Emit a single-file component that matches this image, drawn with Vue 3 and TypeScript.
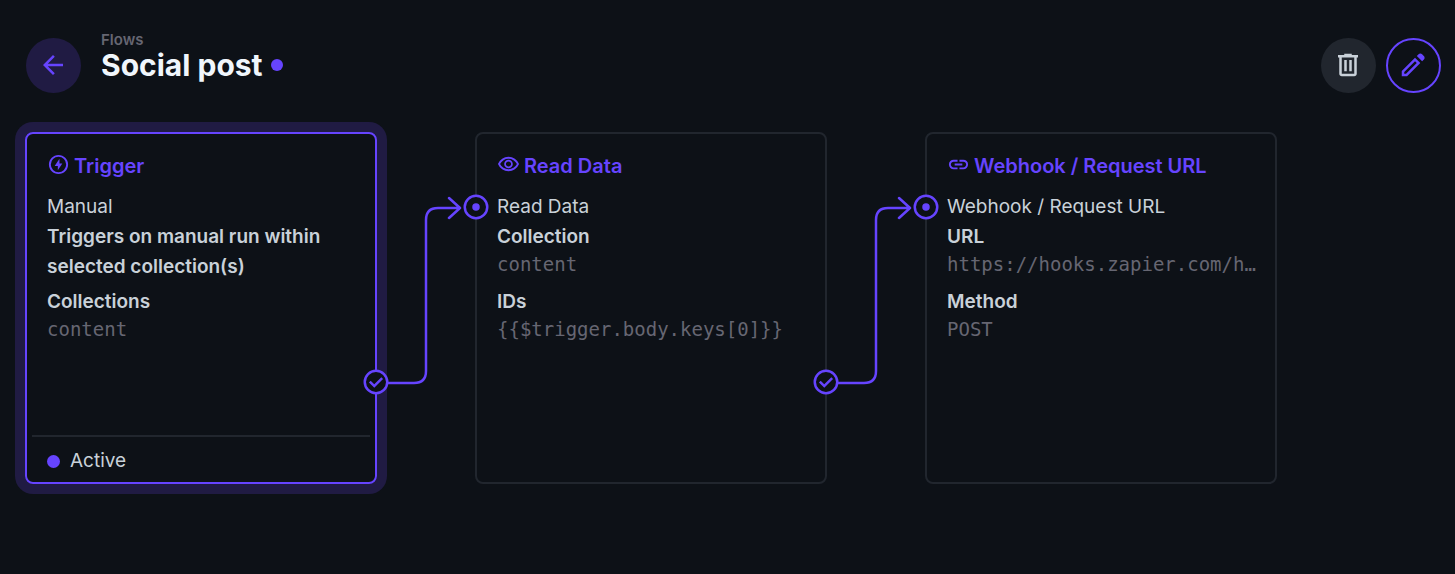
<script setup lang="ts">
interface Option {
  label: string
  value: string
}

interface FlowNode {
  id: string
  title: string
  icon: string
  name: string
  description?: string
  options: Option[]
  status?: string
  hasInput: boolean
  hasOutput: boolean
}

const nodes: FlowNode[] = [
  {
    id: 'trigger',
    title: 'Trigger',
    icon: 'M11.3 18 16 11H13V6L8 13.500h3.300zM12 22q-2.075 0-3.9-.788-1.825-.787-3.175-2.137-1.35-1.35-2.137-3.175Q2 14.075 2 12t.788-3.9q.787-1.825 2.137-3.175 1.35-1.35 3.175-2.137Q9.925 2 12 2t3.9.788q1.825.787 3.175 2.137 1.35 1.35 2.137 3.175Q22 9.925 22 12t-.788 3.9q-.787 1.825-2.137 3.175-1.35 1.35-3.175 2.137Q14.075 22 12 22Zm0-2q3.35 0 5.675-2.325Q20 15.35 20 12q0-3.35-2.325-5.675Q15.35 4 12 4 8.65 4 6.325 6.325 4 8.65 4 12q0 3.35 2.325 5.675Q8.65 20 12 20Z',
    name: 'Manual',
    description: 'Triggers on manual run within selected collection(s)',
    options: [{ label: 'Collections', value: 'content' }],
    status: 'Active',
    hasInput: false,
    hasOutput: true,
  },
  {
    id: 'read',
    title: 'Read Data',
    icon: 'M12 16q1.875 0 3.188-1.312Q16.5 13.375 16.5 11.5q0-1.875-1.312-3.188Q13.875 7 12 7q-1.875 0-3.188 1.312Q7.5 9.625 7.5 11.5q0 1.875 1.312 3.188Q10.125 16 12 16Zm0-1.8q-1.125 0-1.912-.788Q9.3 12.625 9.3 11.5t.788-1.913Q10.875 8.8 12 8.8t1.913.787q.787.788.787 1.913t-.787 1.912q-.788.788-1.913.788Zm0 4.8q-3.65 0-6.65-2.038Q2.35 14.925 1 11.5q1.35-3.425 4.35-5.463Q8.35 4 12 4q3.65 0 6.65 2.037 3 2.038 4.35 5.463-1.35 3.425-4.35 5.462Q15.65 19 12 19Zm0-2q2.825 0 5.188-1.488Q19.55 14.025 20.8 11.5q-1.25-2.525-3.612-4.013Q14.825 6 12 6 9.175 6 6.812 7.487 4.45 8.975 3.2 11.5q1.25 2.525 3.612 4.012Q9.175 17 12 17Z',
    name: 'Read Data',
    options: [
      { label: 'Collection', value: 'content' },
      { label: 'IDs', value: '{{$trigger.body.keys[0]}}' },
    ],
    hasInput: true,
    hasOutput: true,
  },
  {
    id: 'webhook',
    title: 'Webhook / Request URL',
    icon: 'M11 17H7q-2.075 0-3.537-1.463Q2 14.075 2 12q0-2.075 1.463-3.538Q4.925 7 7 7h4v2H7q-1.25 0-2.125.875T4 12q0 1.25.875 2.125T7 15h4Zm-3-4v-2h8v2Zm5 4v-2h4q1.25 0 2.125-.875T20 12q0-1.25-.875-2.125T17 9h-4V7h4q2.075 0 3.538 1.462Q22 9.925 22 12q0 2.075-1.462 3.537Q19.075 17 17 17Z',
    name: 'Webhook / Request URL',
    options: [
      { label: 'URL', value: 'https://hooks.zapier.com/hooks/catch' },
      { label: 'Method', value: 'POST' },
    ],
    hasInput: true,
    hasOutput: false,
  },
]
</script>

<template>
  <div class="page">
    <header class="header">
      <button class="round back" type="button" aria-label="Back">
        <svg viewBox="0 0 24 24"><path d="m12 20-8-8 8-8 1.425 1.4-5.6 5.6H20v2H7.825l5.6 5.6Z" /></svg>
      </button>
      <div class="titles">
        <a class="crumb" href="#">Flows</a>
        <div class="title-row">
          <h1>Social post</h1>
          <span class="dot"></span>
        </div>
      </div>
      <div class="actions">
        <button class="round delete" type="button" aria-label="Delete flow">
          <svg viewBox="0 0 24 24">
            <path d="M7 21q-.825 0-1.412-.587Q5 19.825 5 19V6H4V4h5V3h6v1h5v2h-1v13q0 .825-.587 1.413Q17.825 21 17 21ZM17 6H7v13h10ZM9 17h2V8H9Zm4 0h2V8h-2Z" />
          </svg>
        </button>
        <button class="round edit" type="button" aria-label="Edit flow">
          <svg viewBox="0 0 24 24">
            <path d="M5 19h1.4l8.625-8.625-1.4-1.4L5 17.6ZM19.3 8.925l-4.25-4.2 1.4-1.4q.575-.575 1.413-.575.837 0 1.412.575l1.4 1.4q.575.575.6 1.388.025.812-.55 1.387ZM17.85 10.4 7.25 21H3v-4.25l10.6-10.6Z" />
          </svg>
        </button>
      </div>
    </header>

    <main class="flow">
      <template v-for="(node, index) in nodes" :key="node.id">
        <svg v-if="index > 0" class="wire" viewBox="0 0 98 352" aria-hidden="true">
          <path d="M11 251H37Q49 251 49 239V88Q49 76 61 76H83M72 66L83 76L72 86" />
        </svg>
        <article class="card" :class="{ selected: node.status }">
          <div class="body">
            <h2>
              <svg viewBox="0 0 24 24"><path :d="node.icon" fill-rule="evenodd" /></svg>
              <span>{{ node.title }}</span>
            </h2>
            <p>{{ node.name }}</p>
            <p v-if="node.description" class="description">{{ node.description }}</p>
            <dl>
              <div v-for="option in node.options" :key="option.label" class="option">
                <dt>{{ option.label }}</dt>
                <dd>{{ option.value }}</dd>
              </div>
            </dl>
          </div>
          <footer v-if="node.status" class="status">
            <span class="dot"></span>
            <span>{{ node.status }}</span>
          </footer>
          <svg v-if="node.hasInput" class="port input" viewBox="0 0 24 24">
            <circle class="outline" cx="12" cy="12" r="9" />
            <circle class="mark" cx="12" cy="12" r="3" />
          </svg>
          <svg v-if="node.hasOutput" class="port output" viewBox="0 0 24 24">
            <circle class="outline" cx="12" cy="12" r="9" />
            <path class="mark" d="m10.6 16.6 7.05-7.05-1.4-1.4-5.65 5.65-2.85-2.85-1.4 1.4Z" />
          </svg>
        </article>
      </template>
    </main>
  </div>
</template>

<style>
body {
  margin: 0;
  background: #0d1117;
}
</style>

<style scoped>
.page {
  --primary: #6644ff;
  --subtle: #201b43;
  --line: #21262e;
  --text: #c9d1d9;
  --subdued: #666672;
  box-sizing: border-box;
  min-height: 100vh;
  padding: 32px 14px 32px 25px;
  background: #0d1117;
  color: var(--text);
  font-family: Inter, "Liberation Sans", sans-serif;
  font-size: 19px;
  line-height: 30px;
}

h1,
h2,
p,
dl,
dd {
  margin: 0;
}

.header {
  display: flex;
  align-items: flex-start;
  gap: 20px;
  margin-bottom: 39px;
}

.round {
  box-sizing: border-box;
  display: flex;
  flex: none;
  align-items: center;
  justify-content: center;
  width: 55px;
  height: 55px;
  margin: 6px 0 0;
  padding: 0 1px 2px 0;
  border: 0;
  border-radius: 50%;
  cursor: pointer;
}

.round svg {
  flex: none;
  width: 30px;
  height: 30px;
  fill: currentColor;
}

.back {
  margin-left: 1px;
  background: var(--subtle);
  color: var(--primary);
}

.delete {
  background: var(--line);
  color: var(--text);
}

.edit {
  border: 2px solid var(--primary);
  background: transparent;
  color: var(--primary);
}

.titles {
  flex: 1;
  min-width: 0;
}

.crumb {
  display: block;
  color: var(--subdued);
  font-size: 15px;
  font-weight: 600;
  line-height: 16px;
  text-decoration: none;
}

.title-row {
  display: flex;
  align-items: center;
  gap: 8px;
}

h1 {
  color: #f0f6fc;
  font-size: 30px;
  font-weight: 700;
  line-height: 34px;
}

.dot {
  flex: none;
  width: 12px;
  height: 12px;
  border-radius: 50%;
  background: var(--primary);
}

.actions {
  display: flex;
  gap: 10px;
}

.flow {
  display: flex;
  align-items: flex-start;
}

.wire {
  flex: none;
  width: 98px;
  height: 352px;
}

.wire path {
  fill: none;
  stroke: var(--primary);
  stroke-width: 2.5;
  stroke-linecap: round;
  stroke-linejoin: round;
}

.card {
  position: relative;
  box-sizing: border-box;
  display: flex;
  flex: 0 1 352px;
  flex-direction: column;
  justify-content: space-between;
  min-width: 240px;
  min-height: 352px;
  border: 2px solid var(--line);
  border-radius: 8px;
}

.card.selected {
  border-color: var(--primary);
  box-shadow: 0 0 0 10px var(--subtle);
}

.body {
  padding: 17px 16px 0 20px;
}

h2 {
  display: flex;
  gap: 4px;
  margin-bottom: 11px;
  color: var(--primary);
  font-size: 20px;
  font-weight: 600;
  line-height: 30px;
}

h2 svg {
  flex: none;
  width: 23px;
  height: 23px;
  margin-top: 2px;
  fill: currentColor;
}

.description {
  margin-bottom: 5px;
  font-weight: 600;
}

.option {
  margin-bottom: 11px;
}

dt {
  font-weight: 600;
}

dd {
  overflow: hidden;
  color: var(--subdued);
  font-family: "DejaVu Sans Mono", "Liberation Mono", monospace;
  line-height: 24px;
  text-overflow: ellipsis;
  white-space: nowrap;
}

.status {
  display: flex;
  align-items: center;
  gap: 10px;
  height: 42px;
  margin: 0 5px;
  padding: 3px 15px 0;
  border-top: 2px solid var(--line);
}

.status .dot {
  width: 13px;
  height: 13px;
}

.port {
  position: absolute;
  width: 30px;
  height: 30px;
}

.outline {
  fill: #0d1117;
  stroke: var(--primary);
  stroke-width: 2;
}

.mark {
  fill: var(--primary);
}

.input {
  top: 58px;
  left: -16px;
}

.output {
  top: 233px;
  right: -16px;
}
</style>
